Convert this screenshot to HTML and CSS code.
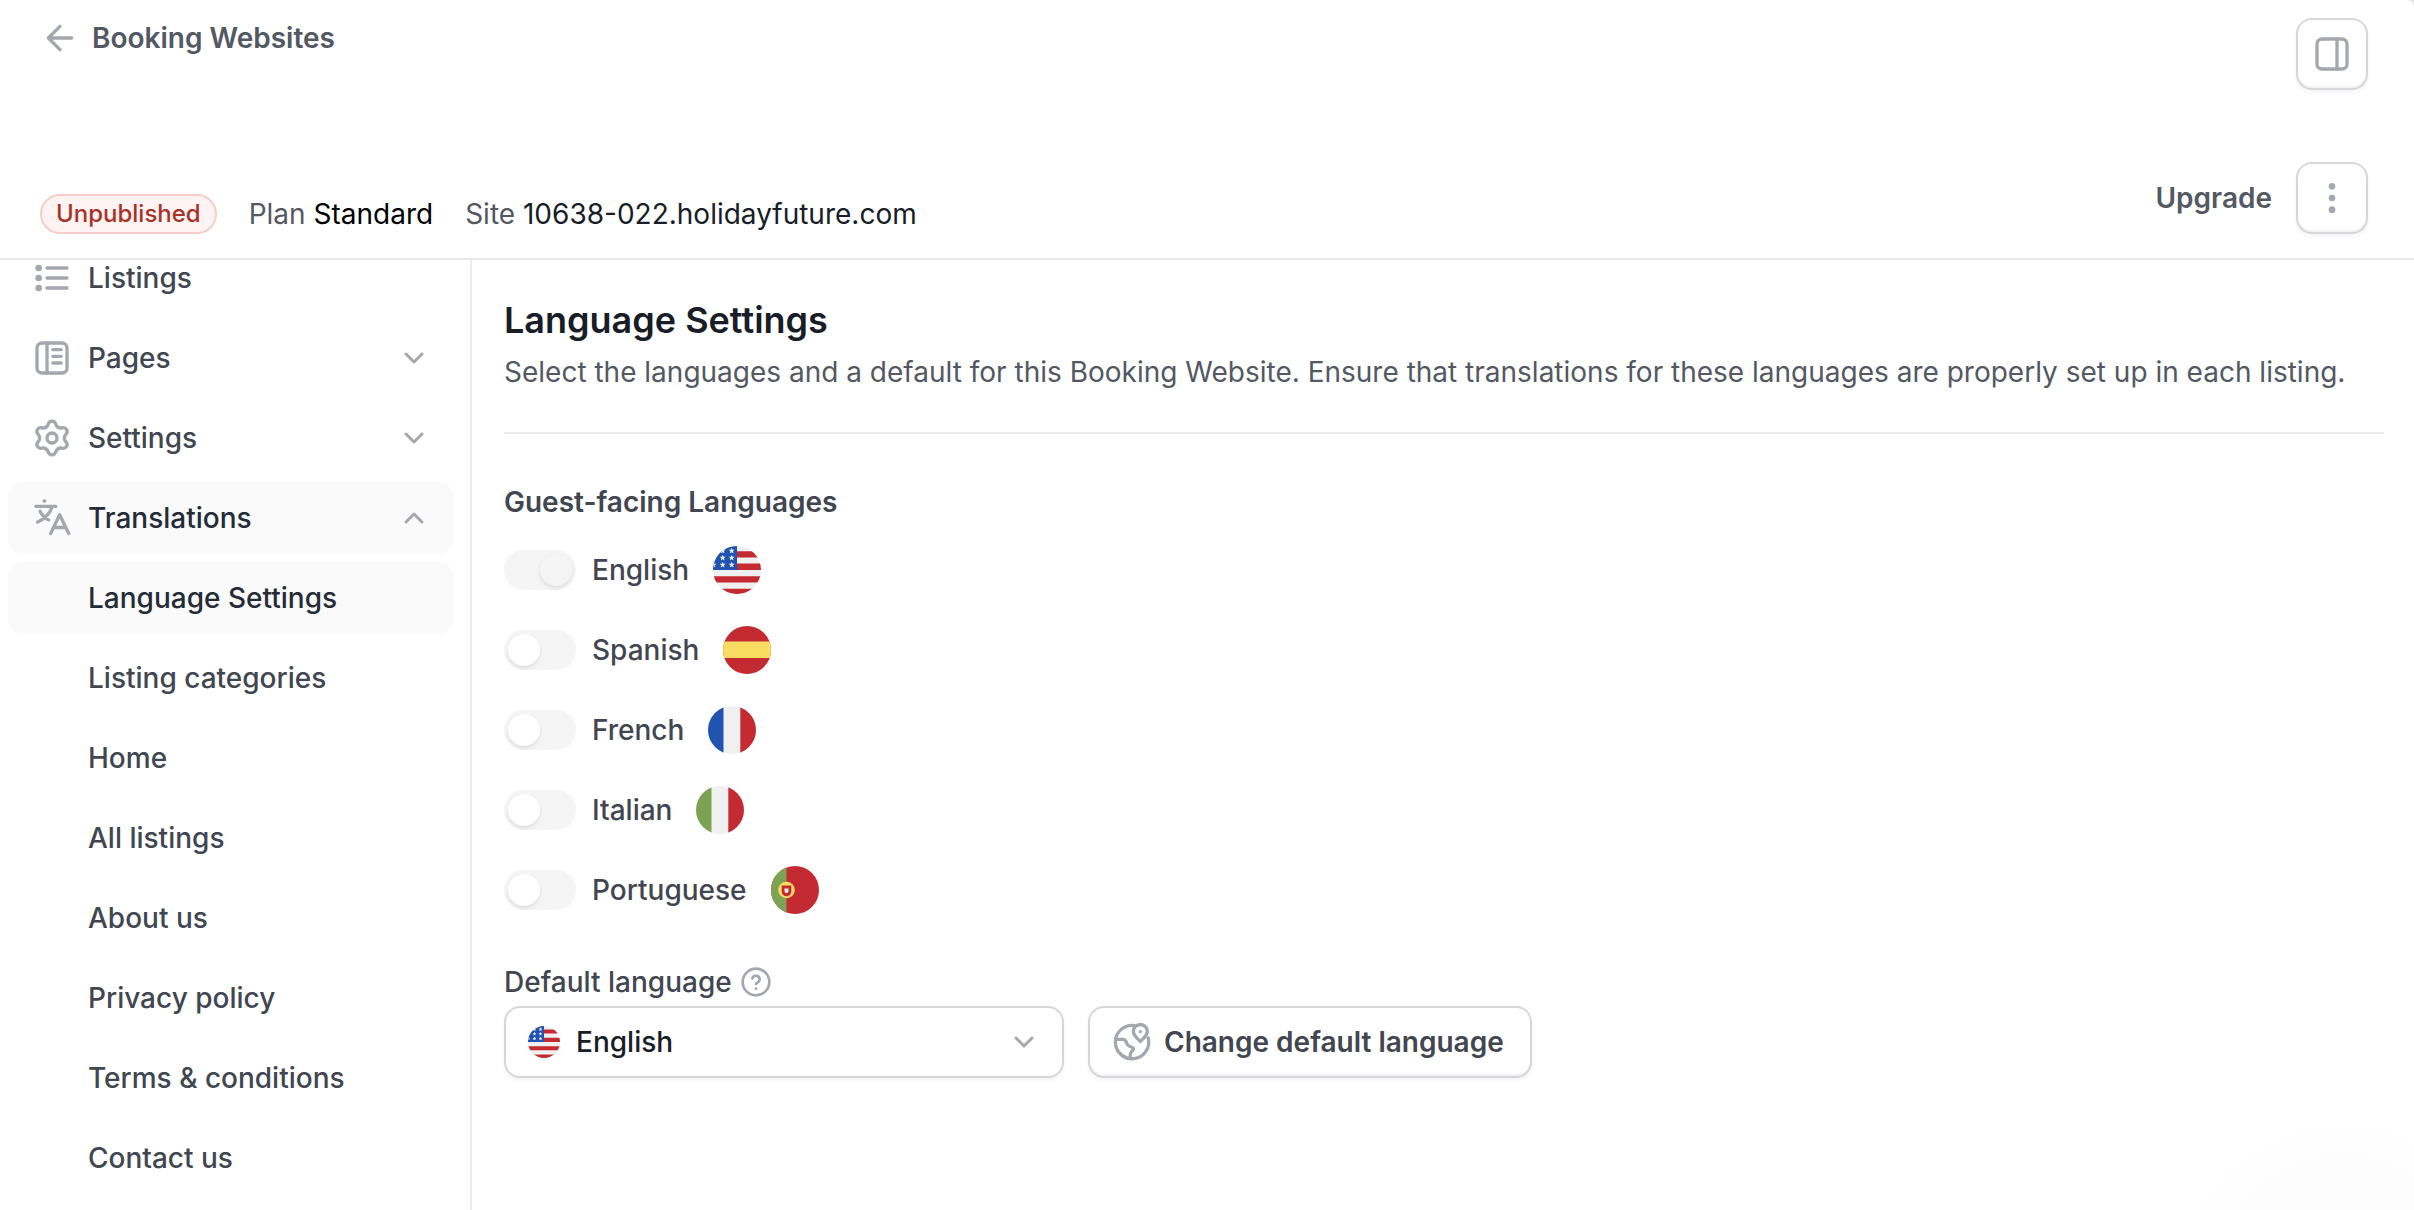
FILE: index.html
```html
<!DOCTYPE html>
<html lang="en">
<head>
<meta charset="utf-8">
<meta name="viewport" content="width=device-width, initial-scale=1">
<title>Language Settings</title>
<link rel="stylesheet" href="styles.css">
</head>
<body>
<svg class="sprite" aria-hidden="true">
  <symbol id="chevron" viewBox="0 0 32 32"><path d="M8 12l8 8 8-8" stroke-width="3"/></symbol>
  <symbol id="star" viewBox="0 0 10 10"><path d="M5 0l1.3 3.4 3.7.2-2.9 2.3 1 3.6L5 7.500l-3.100 2 1-3.600L0 3.600l3.700-.2z"/></symbol>
  <symbol id="flag-us" viewBox="0 0 48 48">
    <g clip-path="url(#disc)">
      <path fill="#f0f0f0" d="M0 0h48v48H0z"/>
      <path fill="#c42a31" d="M0 5.200h48v6.200H0zM0 17.500h48V24H0zM0 30.200h48v6.200H0zM0 42.800h48V48H0z"/>
      <path fill="#2153b0" d="M0 0h24v24H0z"/>
      <g fill="#f0f0f0">
        <use href="#star" x="15.700" y="1.700" width="6" height="6"/>
        <use href="#star" x="6.700" y="1.700" width="6" height="6"/>
        <use href="#star" x="15.700" y="8.700" width="6" height="6"/>
        <use href="#star" x="6.700" y="8.700" width="6" height="6"/>
        <use href="#star" x="15.700" y="15.700" width="6" height="6"/>
        <use href="#star" x="6.700" y="15.700" width="6" height="6"/>
        <use href="#star" x="-2.500" y="15.700" width="6" height="6"/>
      </g>
    </g>
  </symbol>
  <clipPath id="disc"><circle cx="24" cy="24" r="24"/></clipPath>
</svg>

<div class="app">
  <header class="header">
    <a class="back" href="#">
      <svg class="icon" viewBox="0 0 24 24"><path d="M19 12H5m7-7-7 7 7 7"/></svg>
      Booking Websites
    </a>
    <button class="btn btn-icon" type="button" aria-label="Toggle panel">
      <svg class="icon" viewBox="0 0 24 24"><rect x="3" y="3" width="18" height="18" rx="3"/><path d="M15 3v18"/></svg>
    </button>
    <div class="meta">
      <span class="badge">Unpublished</span>
      <span>Plan <strong class="plan">Standard</strong></span>
      <span>Site <a class="site" href="#">10638-022.holidayfuture.com</a></span>
    </div>
    <div class="actions">
      <button class="btn-text" type="button">Upgrade</button>
      <button class="btn btn-icon" type="button" aria-label="More actions">
        <svg class="icon icon-solid" viewBox="0 0 24 24"><circle cx="12" cy="5" r="2"/><circle cx="12" cy="12" r="2"/><circle cx="12" cy="19" r="2"/></svg>
      </button>
    </div>
  </header>

  <div class="body">
    <aside class="sidebar">
      <nav class="nav">
        <a class="nav-item" href="#">
          <svg class="icon" viewBox="0 0 24 24"><path d="M9 6h12M9 12h12M9 18h12"/><g class="icon-solid"><circle cx="4" cy="6" r="2"/><circle cx="4" cy="12" r="2"/><circle cx="4" cy="18" r="2"/></g></svg>
          Listings
        </a>
        <button class="nav-item" type="button">
          <svg class="icon" viewBox="0 0 24 24"><rect x="3" y="3" width="18" height="18" rx="3"/><path d="M9 3v18M12.500 7h5M12.500 11h5M12.500 15h5"/></svg>
          Pages
          <svg class="chevron"><use href="#chevron"/></svg>
        </button>
        <button class="nav-item" type="button">
          <svg class="icon" viewBox="0 0 24 24">
            <defs><path id="lobe" d="M8.300 5.590C9.200 5.070 9.500 4.600 9.800 3.600 10.200 2.300 11 1.900 12 1.900s1.800.4 2.200 1.700c.3 1 .6 1.470 1.500 1.990"/></defs>
            <use href="#lobe"/>
            <use href="#lobe" transform="rotate(60 12 12)"/>
            <use href="#lobe" transform="rotate(120 12 12)"/>
            <use href="#lobe" transform="rotate(180 12 12)"/>
            <use href="#lobe" transform="rotate(240 12 12)"/>
            <use href="#lobe" transform="rotate(300 12 12)"/>
            <circle cx="12" cy="12" r="3"/>
          </svg>
          Settings
          <svg class="chevron"><use href="#chevron"/></svg>
        </button>
        <button class="nav-item active" type="button" aria-expanded="true">
          <svg class="icon" viewBox="0 0 24 24"><path d="M7.300 1.800h.4M2.300 5h12M12 5.400c-1 3.600-4.500 7.300-8.600 9M4.900 8c1 2.200 2.800 4 5.100 5.200M11.200 21.300l5.400-11.300L22 21.300M13.300 17.700h6.800"/></svg>
          Translations
          <svg class="chevron chevron-up"><use href="#chevron"/></svg>
        </button>
        <a class="nav-item sub active" href="#" aria-current="page">Language Settings</a>
        <a class="nav-item sub" href="#">Listing categories</a>
        <a class="nav-item sub" href="#">Home</a>
        <a class="nav-item sub" href="#">All listings</a>
        <a class="nav-item sub" href="#">About us</a>
        <a class="nav-item sub" href="#">Privacy policy</a>
        <a class="nav-item sub" href="#">Terms &amp; conditions</a>
        <a class="nav-item sub" href="#">Contact us</a>
      </nav>
    </aside>

    <main class="main">
      <div class="intro">
        <h1 class="title">Language Settings</h1>
        <p class="subtitle">Select the languages and a default for this Booking Website. Ensure that translations for these languages are properly set up in each listing.</p>
      </div>

      <fieldset class="languages">
        <legend class="legend">Guest-facing Languages</legend>
        <div class="lang">
          <input class="toggle" type="checkbox" id="en" checked disabled>
          <label for="en">English</label>
          <svg class="flag"><use href="#flag-us"/></svg>
        </div>
        <div class="lang">
          <input class="toggle" type="checkbox" id="es">
          <label for="es">Spanish</label>
          <svg class="flag" viewBox="0 0 48 48"><g clip-path="url(#disc)"><path fill="#c42a31" d="M0 0h48v48H0z"/><path fill="#f9dd62" d="M0 15.500h48v16.500H0z"/></g></svg>
        </div>
        <div class="lang">
          <input class="toggle" type="checkbox" id="fr">
          <label for="fr">French</label>
          <svg class="flag" viewBox="0 0 48 48"><g clip-path="url(#disc)"><path fill="#f0f0f0" d="M0 0h48v48H0z"/><path fill="#2153b0" d="M0 0h15.500v48H0z"/><path fill="#c42a31" d="M32.300 0H48v48H32.300z"/></g></svg>
        </div>
        <div class="lang">
          <input class="toggle" type="checkbox" id="it">
          <label for="it">Italian</label>
          <svg class="flag" viewBox="0 0 48 48"><g clip-path="url(#disc)"><path fill="#f0f0f0" d="M0 0h48v48H0z"/><path fill="#7ba353" d="M0 0h15.500v48H0z"/><path fill="#c42a31" d="M32.300 0H48v48H32.300z"/></g></svg>
        </div>
        <div class="lang">
          <input class="toggle" type="checkbox" id="pt">
          <label for="pt">Portuguese</label>
          <svg class="flag" viewBox="0 0 48 48"><g clip-path="url(#disc)"><path fill="#c42a31" d="M0 0h48v48H0z"/><path fill="#7ba353" d="M0 0h15.500v48H0z"/></g><circle cx="15.500" cy="24" r="8.300" fill="#f9dd62"/><path fill="#c42a31" d="M10.700 19.500h9.600v6a4.800 4.800 0 0 1-9.600 0z"/><path fill="#f0f0f0" d="M13.500 22.500h4v2.500a2 2 0 0 1-4 0z"/></svg>
        </div>
      </fieldset>

      <div class="default">
        <div class="default-label">
          <label for="default-language">Default language</label>
          <svg class="help" viewBox="0 0 24 24"><circle cx="12" cy="12" r="10"/><path d="M9.200 9.200a2.900 2.900 0 0 1 5.600.9c0 1.900-2.800 2.500-2.800 3.400M12 17h.01"/></svg>
        </div>
        <div class="default-row">
          <div class="select-box">
            <svg class="select-flag"><use href="#flag-us"/></svg>
            <select class="select" id="default-language"><option>English</option></select>
            <svg class="chevron"><use href="#chevron"/></svg>
          </div>
          <button class="btn btn-labelled" type="button">
            <svg class="icon" viewBox="0 0 24 24"><path d="M13.200 2.100A10 10 0 1 0 21.700 9.500M2.300 10.400h4.300c1.600 0 1.800 1 2.200 2.300.5 1.600 1.200 1.700 2.400 2.200 2 .8 2.300 1.100 1 2.300-1.200 1.100-1.400 1.600-1.300 2.800v1.900M17 11.700c-2.400-2.300-4.200-3.900-4.200-6a4.200 4.200 0 0 1 8.400 0c0 2.100-1.800 3.700-4.200 6zM17 5.800h.01"/></svg>
            Change default language
          </button>
        </div>
      </div>
    </main>
  </div>
</div>
</body>
</html>
```
FILE: styles.css
```css
:root {
  --ink: #181d27;
  --ink-active: #252b37;
  --ink-body: #414651;
  --ink-soft: #535862;
  --icon: #a4a7ae;
  --line: #e9eaeb;
  --control: #d5d7da;
}

* {
  box-sizing: border-box;
}

body {
  margin: 0;
  background: var(--line);
  color: var(--ink-body);
  font: 500 28px/40px Inter, "Liberation Sans", sans-serif;
  font-optical-sizing: none;
}

button,
select {
  margin: 0;
  font: inherit;
  font-optical-sizing: none;
  color: inherit;
}

a {
  color: inherit;
  text-decoration: none;
}

.sprite {
  position: absolute;
  width: 0;
  height: 0;
}

.app {
  display: flex;
  flex-direction: column;
  min-height: 100vh;
  border-top-right-radius: 8px;
  background: radial-gradient(circle 180px at right 70px bottom -80px, #f9f9f9, #fff) #fff;
}

.icon,
.chevron,
.help {
  flex: none;
  fill: none;
  stroke: var(--icon);
  stroke-width: 2;
  stroke-linecap: round;
  stroke-linejoin: round;
}

.icon {
  width: 40px;
  height: 40px;
}

.icon-solid {
  fill: var(--icon);
  stroke: none;
}

.chevron {
  width: 32px;
  height: 32px;
}

.chevron-up {
  transform: rotate(180deg);
}

/* Header */

.header {
  display: grid;
  grid-template-columns: 1fr auto;
  row-gap: 72px;
  padding: 18px 46px 24px 40px;
  border-bottom: 2px solid var(--line);
}

.back {
  display: flex;
  align-items: center;
  gap: 12px;
  place-self: start;
  font-weight: 600;
  color: var(--ink-soft);
}

.header > .btn {
  justify-self: end;
}

.meta {
  display: flex;
  align-items: center;
  align-self: end;
  gap: 32px;
  font-weight: 400;
  color: var(--ink-soft);
}

.badge {
  padding: 0 14px;
  border: 2px solid #f6cdca;
  border-radius: 20px;
  background: #fdf3f2;
  color: #a93226;
  font-size: 24px;
  line-height: 36px;
  font-weight: 500;
}

.plan {
  font-weight: 400;
  color: #000;
}

.site {
  color: var(--ink);
}

.actions {
  display: flex;
  align-items: center;
  gap: 24px;
}

.btn {
  display: flex;
  align-items: center;
  justify-content: center;
  gap: 12px;
  height: 72px;
  border: 2px solid var(--control);
  border-radius: 16px;
  background: #fff;
  box-shadow: 0 2px 4px rgb(10 13 18 / 5%), inset 0 -2px 0 rgb(10 13 18 / 5%);
  font-weight: 600;
}

.btn-icon {
  width: 72px;
  padding: 0;
}

.btn-labelled {
  padding: 0 26px 0 22px;
}

.btn-text {
  padding: 0;
  border: 0;
  background: none;
  font-weight: 600;
  color: var(--ink-soft);
}

/* Sidebar */

.body {
  display: flex;
  flex: 1;
}

.sidebar {
  flex: none;
  width: 472px;
  padding: 0 16px 0 8px;
  border-right: 2px solid var(--line);
  overflow: hidden;
}

.nav {
  display: flex;
  flex-direction: column;
  gap: 8px;
  margin-top: -18px;
}

.nav-item {
  display: flex;
  align-items: center;
  gap: 16px;
  height: 72px;
  padding: 0 24px;
  border: 0;
  border-radius: 16px;
  background: none;
  text-align: left;
}

.nav-item .chevron {
  margin-left: auto;
}

.sub {
  padding-left: 80px;
}

.active {
  background: #fafafa;
  color: var(--ink-active);
}

/* Main */

.main {
  flex: 1;
  min-width: 0;
  padding: 32px 30px 32px 32px;
}

.intro {
  padding-bottom: 40px;
  border-bottom: 2px solid var(--line);
}

.title {
  margin: 0;
  font-size: 36px;
  line-height: 56px;
  font-weight: 600;
  color: var(--ink);
}

.subtitle {
  margin: 4px 0 0;
  font-weight: 400;
  color: var(--ink-soft);
}

.languages {
  display: grid;
  gap: 32px;
  margin: 48px 0 0;
  padding: 0;
  border: 0;
}

.legend {
  margin-bottom: 24px;
  padding: 0;
  font-weight: 600;
}

.lang {
  display: flex;
  align-items: center;
  height: 48px;
}

.toggle {
  appearance: none;
  width: 72px;
  height: 40px;
  margin: 0 16px 0 0;
  padding: 4px;
  border-radius: 20px;
  background: #f5f5f5;
}

.toggle::before {
  content: "";
  display: block;
  width: 32px;
  height: 32px;
  border-radius: 50%;
  background: #fff;
  box-shadow: 0 2px 4px rgb(10 13 18 / 10%);
}

.toggle:checked::before {
  margin-left: 32px;
  background: #f5f5f5;
}

.flag {
  width: 48px;
  height: 48px;
  margin-left: 24px;
}

.default {
  margin-top: 48px;
}

.default-label {
  display: flex;
  align-items: center;
  gap: 8px;
  margin-bottom: 4px;
}

.help {
  width: 32px;
  height: 32px;
}

.default-row {
  display: flex;
  gap: 24px;
}

.select-box {
  display: grid;
  grid-template-columns: 72px 1fr 56px;
  align-items: center;
  width: 560px;
}

.select-box > * {
  grid-row: 1;
}

.select-flag {
  grid-column: 1;
  z-index: 1;
  width: 32px;
  height: 32px;
  margin-left: 24px;
  pointer-events: none;
}

.select {
  grid-column: 1 / -1;
  appearance: none;
  height: 72px;
  padding: 0 56px 0 70px;
  border: 2px solid var(--control);
  border-radius: 16px;
  background: #fff;
  box-shadow: 0 2px 4px rgb(10 13 18 / 5%);
  color: var(--ink);
}

.select-box .chevron {
  grid-column: 3;
  pointer-events: none;
}
```
